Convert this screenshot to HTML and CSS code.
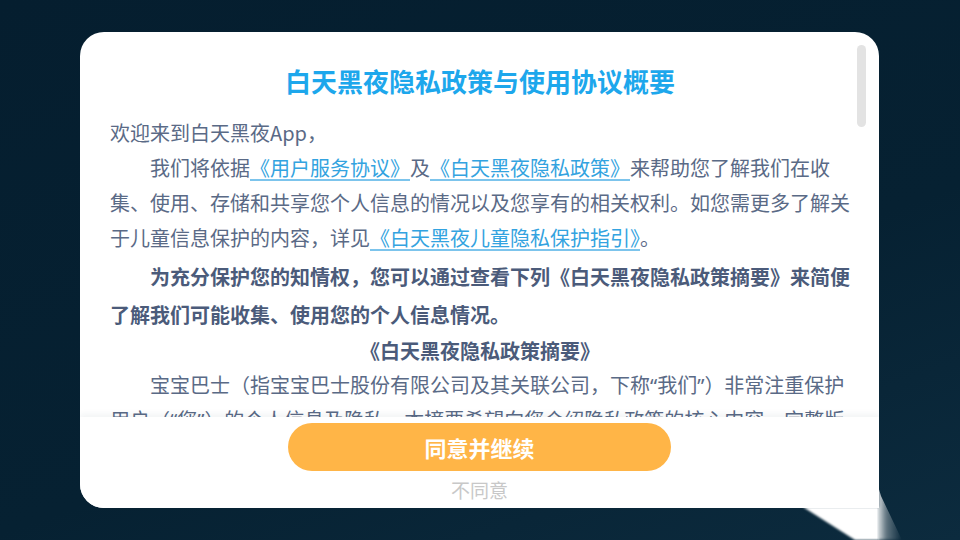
FILE: index.html
```html
<!DOCTYPE html>
<html lang="zh-CN">
<head>
<meta charset="utf-8">
<title>白天黑夜隐私政策与使用协议概要</title>
<link rel="stylesheet" href="styles.css">
</head>
<body>
<div class="stage">
  <div class="dialog">
    <div class="content">
      <h1 class="title">白天黑夜隐私政策与使用协议概要</h1>
      <p class="p p-welcome">欢迎来到白天黑夜App，</p>
      <p class="p indent">我们将依据<a class="link">《用户服务协议》</a>及<a class="link">《白天黑夜隐私政策》</a>来帮助您了解我们在收集、使用、存储和共享您个人信息的情况以及您享有的相关权利。如您需更多了解关于儿童信息保护的内容，详见<a class="link">《白天黑夜儿童隐私保护指引》</a>。</p>
      <p class="p indent bold">为充分保护您的知情权，您可以通过查看下列《白天黑夜隐私政策摘要》来简便了解我们可能收集、使用您的个人信息情况。</p>
      <p class="p bold center">《白天黑夜隐私政策摘要》</p>
      <p class="p indent summary">宝宝巴士（指宝宝巴士股份有限公司及其关联公司，下称<span class="q">“</span>我们<span class="q">”</span>）非常注重保护用户（<span class="q">“</span>您<span class="q">”</span>）的个人信息及隐私。本摘要希望向您介绍隐私政策的核心内容。完整版隐私政策请查阅上方链接。</p>
    </div>
    <div class="scrollbar"></div>
    <div class="footer">
      <button class="agree">同意并继续</button>
      <div class="disagree">不同意</div>
    </div>
  </div>
</div>
<div class="glare"><div class="glare-cut"></div></div>
<div class="glare-edge"></div>
</body>
</html>
```
FILE: styles.css
```css
html, body {
  margin: 0;
  padding: 0;
}
body {
  width: 960px;
  height: 540px;
  overflow: hidden;
  background: linear-gradient(160deg, #051e2f 0%, #062132 60%, #0c2b3e 100%);
  font-family: "Noto Sans CJK SC", "Noto Sans", sans-serif;
  position: relative;
}
.stage {
  padding: 32px 81px 32px 80px;
  box-sizing: border-box;
  height: 540px;
  display: flex;
}
.dialog {
  position: relative;
  flex: 1;
  background: #fff;
  border-radius: 24px 24px 0 24px;
  display: flex;
  flex-direction: column;
  overflow: hidden;
}
.content {
  flex: 1;
  overflow: hidden;
  padding: 29px 29px 0 30px;
  color: #5a6a86;
  font-size: 20px;
}
.title {
  margin: 0 0 14px;
  text-align: center;
  font-size: 26px;
  line-height: 40px;
  font-weight: 700;
  color: #1da7ec;
}
.p {
  margin: 0;
  line-height: 35px;
}
.indent {
  text-indent: 2em;
}
.bold {
  font-weight: 700;
  color: #4b5b7a;
  line-height: 38px;
  margin-top: 3px;
}
.center {
  text-align: center;
  line-height: 34px;
  margin-top: 0;
}
.summary {
  line-height: 34px;
}
.q {
  font-family: "Noto Sans", "Liberation Sans", sans-serif;
}
.link {
  color: #33a3e0;
  text-decoration: underline;
  text-decoration-color: #7cc4ec;
  text-underline-offset: 3px;
}
.scrollbar {
  position: absolute;
  left: 777px;
  top: 13px;
  width: 9px;
  height: 82px;
  border-radius: 5px;
  background: #e3e3e3;
}
.footer {
  height: 91px;
  flex: none;
  background: #fff;
  box-shadow: 0 -3px 6px rgba(40, 60, 90, 0.06);
  display: flex;
  flex-direction: column;
  align-items: center;
  position: relative;
}
.agree {
  margin-top: 6px;
  width: 383px;
  height: 48px;
  border: none;
  border-radius: 24px;
  background: #ffb547;
  color: #fff;
  font-family: "Noto Sans CJK SC", "Noto Sans", sans-serif;
  font-size: 22px;
  font-weight: 700;
  padding: 0;
}
.disagree {
  margin-top: 9px;
  font-size: 19px;
  line-height: 20px;
  color: #c8c8c8;
}
.glare {
  position: absolute;
  left: 0;
  top: 0;
  width: 960px;
  height: 540px;
  filter: blur(1.2px);
  pointer-events: none;
}
.glare-cut {
  width: 100%;
  height: 100%;
  background: #fff;
  clip-path: polygon(803px 507px, 879px 507px, 879px 540px, 855px 540px);
}
.glare-edge {
  position: absolute;
  left: 878px;
  top: 486px;
  width: 24px;
  height: 54px;
  background: linear-gradient(90deg, rgba(255,255,255,0.85) 0%, rgba(255,255,255,0.35) 35%, rgba(255,255,255,0) 100%);
  clip-path: polygon(0 0, 3px 10px, 100% 100%, 0 100%);
  filter: blur(1.5px);
  pointer-events: none;
}
```
